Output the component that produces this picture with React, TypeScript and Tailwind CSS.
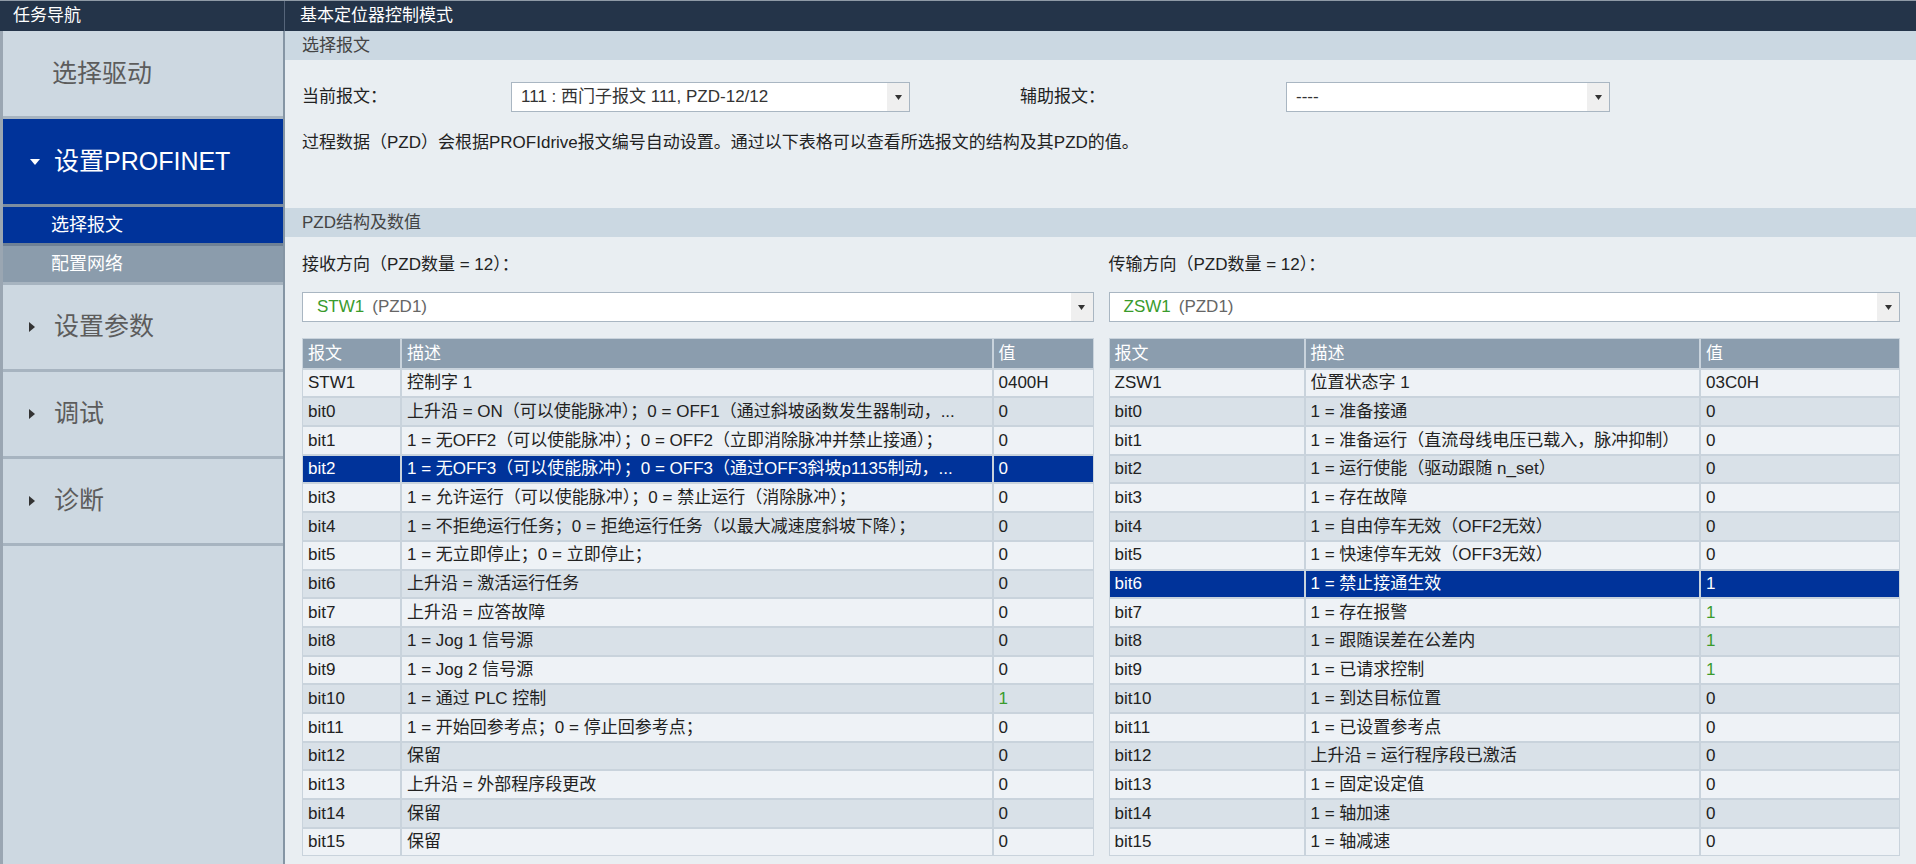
import React from "react";

type Row = { name: string; desc: string; value: string; green?: boolean; selected?: boolean };

const receiveRows: Row[] = [
  { name: "STW1", desc: "控制字 1", value: "0400H" },
  { name: "bit0", desc: "上升沿 = ON（可以使能脉冲）；0 = OFF1（通过斜坡函数发生器制动，...", value: "0" },
  { name: "bit1", desc: "1 = 无OFF2（可以使能脉冲）；0 = OFF2（立即消除脉冲并禁止接通）；", value: "0" },
  { name: "bit2", desc: "1 = 无OFF3（可以使能脉冲）；0 = OFF3（通过OFF3斜坡p1135制动，...", value: "0", selected: true },
  { name: "bit3", desc: "1 = 允许运行（可以使能脉冲）；0 = 禁止运行（消除脉冲）；", value: "0" },
  { name: "bit4", desc: "1 = 不拒绝运行任务；0 = 拒绝运行任务（以最大减速度斜坡下降）；", value: "0" },
  { name: "bit5", desc: "1 = 无立即停止；0 = 立即停止；", value: "0" },
  { name: "bit6", desc: "上升沿 = 激活运行任务", value: "0" },
  { name: "bit7", desc: "上升沿 = 应答故障", value: "0" },
  { name: "bit8", desc: "1 = Jog 1 信号源", value: "0" },
  { name: "bit9", desc: "1 = Jog 2 信号源", value: "0" },
  { name: "bit10", desc: "1 = 通过 PLC 控制", value: "1", green: true },
  { name: "bit11", desc: "1 = 开始回参考点；0 = 停止回参考点；", value: "0" },
  { name: "bit12", desc: "保留", value: "0" },
  { name: "bit13", desc: "上升沿 = 外部程序段更改", value: "0" },
  { name: "bit14", desc: "保留", value: "0" },
  { name: "bit15", desc: "保留", value: "0" },
];

const sendRows: Row[] = [
  { name: "ZSW1", desc: "位置状态字 1", value: "03C0H" },
  { name: "bit0", desc: "1 = 准备接通", value: "0" },
  { name: "bit1", desc: "1 = 准备运行（直流母线电压已载入，脉冲抑制）", value: "0" },
  { name: "bit2", desc: "1 = 运行使能（驱动跟随 n_set）", value: "0" },
  { name: "bit3", desc: "1 = 存在故障", value: "0" },
  { name: "bit4", desc: "1 = 自由停车无效（OFF2无效）", value: "0" },
  { name: "bit5", desc: "1 = 快速停车无效（OFF3无效）", value: "0" },
  { name: "bit6", desc: "1 = 禁止接通生效", value: "1", selected: true },
  { name: "bit7", desc: "1 = 存在报警", value: "1", green: true },
  { name: "bit8", desc: "1 = 跟随误差在公差内", value: "1", green: true },
  { name: "bit9", desc: "1 = 已请求控制", value: "1", green: true },
  { name: "bit10", desc: "1 = 到达目标位置", value: "0" },
  { name: "bit11", desc: "1 = 已设置参考点", value: "0" },
  { name: "bit12", desc: "上升沿 = 运行程序段已激活", value: "0" },
  { name: "bit13", desc: "1 = 固定设定值", value: "0" },
  { name: "bit14", desc: "1 = 轴加速", value: "0" },
  { name: "bit15", desc: "1 = 轴减速", value: "0" },
];

function Caret() {
  return (
    <svg width="7" height="5" viewBox="0 0 7 5" className="fill-[#333]">
      <polygon points="0,0 7,0 3.5,5" />
    </svg>
  );
}

function Select({ children, className }: { children: React.ReactNode; className: string }) {
  return (
    <div className={`flex h-[30px] items-stretch border border-[#a9b6c2] bg-white ${className}`}>
      <div className="flex flex-1 items-center overflow-hidden whitespace-nowrap pl-[9px] text-[17px] text-[#333]">
        {children}
      </div>
      <div className="flex w-[22px] items-center justify-center bg-[#efefef]">
        <Caret />
      </div>
    </div>
  );
}

function PzdTable({ rows, cols }: { rows: Row[]; cols: string }) {
  return (
    <div className="border border-[#c9d3dc] text-[17px]">
      <div className={`grid h-[28.7px] ${cols} bg-[#8b9dae] text-white`}>
        <div className="flex items-center border-r-2 border-[#c9d3dc] pl-[5px]">报文</div>
        <div className="flex items-center border-r-2 border-[#c9d3dc] pl-[5px]">描述</div>
        <div className="flex items-center pl-[5px]">值</div>
      </div>
      {rows.map((r, i) => {
        const bg = r.selected
          ? "bg-[#00339a] text-white"
          : i % 2 === 0
          ? "bg-[#eef2f6] text-[#222]"
          : "bg-[#d9e1e8] text-[#222]";
        const valColor = r.selected ? "text-white" : r.green ? "text-[#3a9b2c]" : "";
        return (
          <div key={r.name} className={`grid h-[28.7px] ${cols} border-t-2 border-[#c9d3dc] ${bg}`}>
            <div className="flex items-center border-r-2 border-[#c9d3dc] pl-[5px]">{r.name}</div>
            <div className="flex items-center overflow-hidden border-r-2 border-[#c9d3dc] pl-[5px]">
              <span className="truncate">{r.desc}</span>
            </div>
            <div className={`flex items-center pl-[5px] ${valColor}`}>{r.value}</div>
          </div>
        );
      })}
    </div>
  );
}

function NavItem({ label, arrow }: { label: string; arrow?: boolean }) {
  return (
    <div className="flex h-[87px] items-center border-b-[3px] border-[#a7b4c0] bg-[#cdd8e1] text-[25px] text-[#5c5c5c]">
      {arrow ? (
        <svg width="6" height="10" viewBox="0 0 6 10" className="ml-[26px] mr-[19px] fill-[#333]">
          <polygon points="0,0 6,5 0,10" />
        </svg>
      ) : (
        <span className="w-[49px]" />
      )}
      <span>{label}</span>
    </div>
  );
}

export default function App() {
  return (
    <div className="flex h-[864px] w-full flex-col overflow-hidden bg-[#e9eef2] font-['Liberation_Sans','Noto_Sans_CJK_SC',sans-serif]">
      {/* Top bar */}
      <div className="flex h-[31px] shrink-0 border-t border-[#8f9aa6] bg-[#243449] text-[17px] text-white">
        <div className="flex w-[285px] items-center border-r border-[#56657a] pl-[13px]">任务导航</div>
        <div className="flex flex-1 items-center pl-[15px]">基本定位器控制模式</div>
      </div>

      <div className="flex flex-1">
        {/* Sidebar */}
        <aside className="flex w-[285px] shrink-0 flex-col border-l-[3px] border-r-2 border-l-[#9aa6b2] border-r-[#8595a4] bg-[#cdd8e1]">
          <div className="flex h-[88px] items-center border-b-[3px] border-[#a7b4c0] bg-[#cdd8e1] text-[25px] text-[#5c5c5c]">
            <span className="w-[49px]" />
            <span>选择驱动</span>
          </div>
          <div className="flex h-[88px] items-center border-b-[3px] border-[#7c8da0] bg-[#00339a] text-[25px] text-white">
            <svg width="10" height="6" viewBox="0 0 10 6" className="ml-[27px] mr-[14px] fill-white">
              <polygon points="0,0 10,0 5,6" />
            </svg>
            <span>设置PROFINET</span>
          </div>
          <div className="flex h-[39px] items-center border-b-[3px] border-[#6f8195] bg-[#00339a] pl-[48px] text-[18px] text-white">
            选择报文
          </div>
          <div className="flex h-[39px] items-center border-b-[3px] border-[#a7b4c0] bg-[#8b9cac] pl-[48px] text-[18px] text-white">
            配置网络
          </div>
          <NavItem label="设置参数" arrow />
          <NavItem label="调试" arrow />
          <NavItem label="诊断" arrow />
          <div className="flex-1" />
        </aside>

        {/* Main */}
        <main className="flex flex-1 flex-col">
          <div className="flex h-[29px] items-center bg-[#cbd8e2] pl-[17px] text-[17px] text-[#444]">选择报文</div>

          <div className="flex h-[148px] flex-col px-[17px] text-[17px] text-[#222]">
            <div className="mt-[22px] flex items-center">
              <span className="w-[209px]">当前报文：</span>
              <Select className="w-[399px]">111 : 西门子报文 111, PZD-12/12</Select>
              <span className="ml-[110px] w-[266px]">辅助报文：</span>
              <Select className="w-[324px]">----</Select>
            </div>
            <p className="mt-[18px]">
              过程数据（PZD）会根据PROFIdrive报文编号自动设置。通过以下表格可以查看所选报文的结构及其PZD的值。
            </p>
          </div>

          <div className="flex h-[29px] items-center bg-[#cbd8e2] pl-[17px] text-[17px] text-[#444]">PZD结构及数值</div>

          <div className="grid grid-cols-2 gap-[15px] px-[17px] pr-[16px] text-[17px] text-[#222]">
            <div className="flex flex-col">
              <div className="flex h-[55px] items-center">接收方向（PZD数量 = 12）：</div>
              <Select className="w-full">
                <span className="pl-[5px] text-[#3a9b2c]">STW1</span>
                <span className="ml-[8px] text-[#666]">(PZD1)</span>
              </Select>
              <div className="mt-[16px]">
                <PzdTable rows={receiveRows} cols="grid-cols-[99px_1fr_99px]" />
              </div>
            </div>
            <div className="flex flex-col">
              <div className="flex h-[55px] items-center">传输方向（PZD数量 = 12）：</div>
              <Select className="w-full">
                <span className="pl-[5px] text-[#3a9b2c]">ZSW1</span>
                <span className="ml-[8px] text-[#666]">(PZD1)</span>
              </Select>
              <div className="mt-[16px]">
                <PzdTable rows={sendRows} cols="grid-cols-[196px_1fr_198px]" />
              </div>
            </div>
          </div>
        </main>
      </div>
    </div>
  );
}
